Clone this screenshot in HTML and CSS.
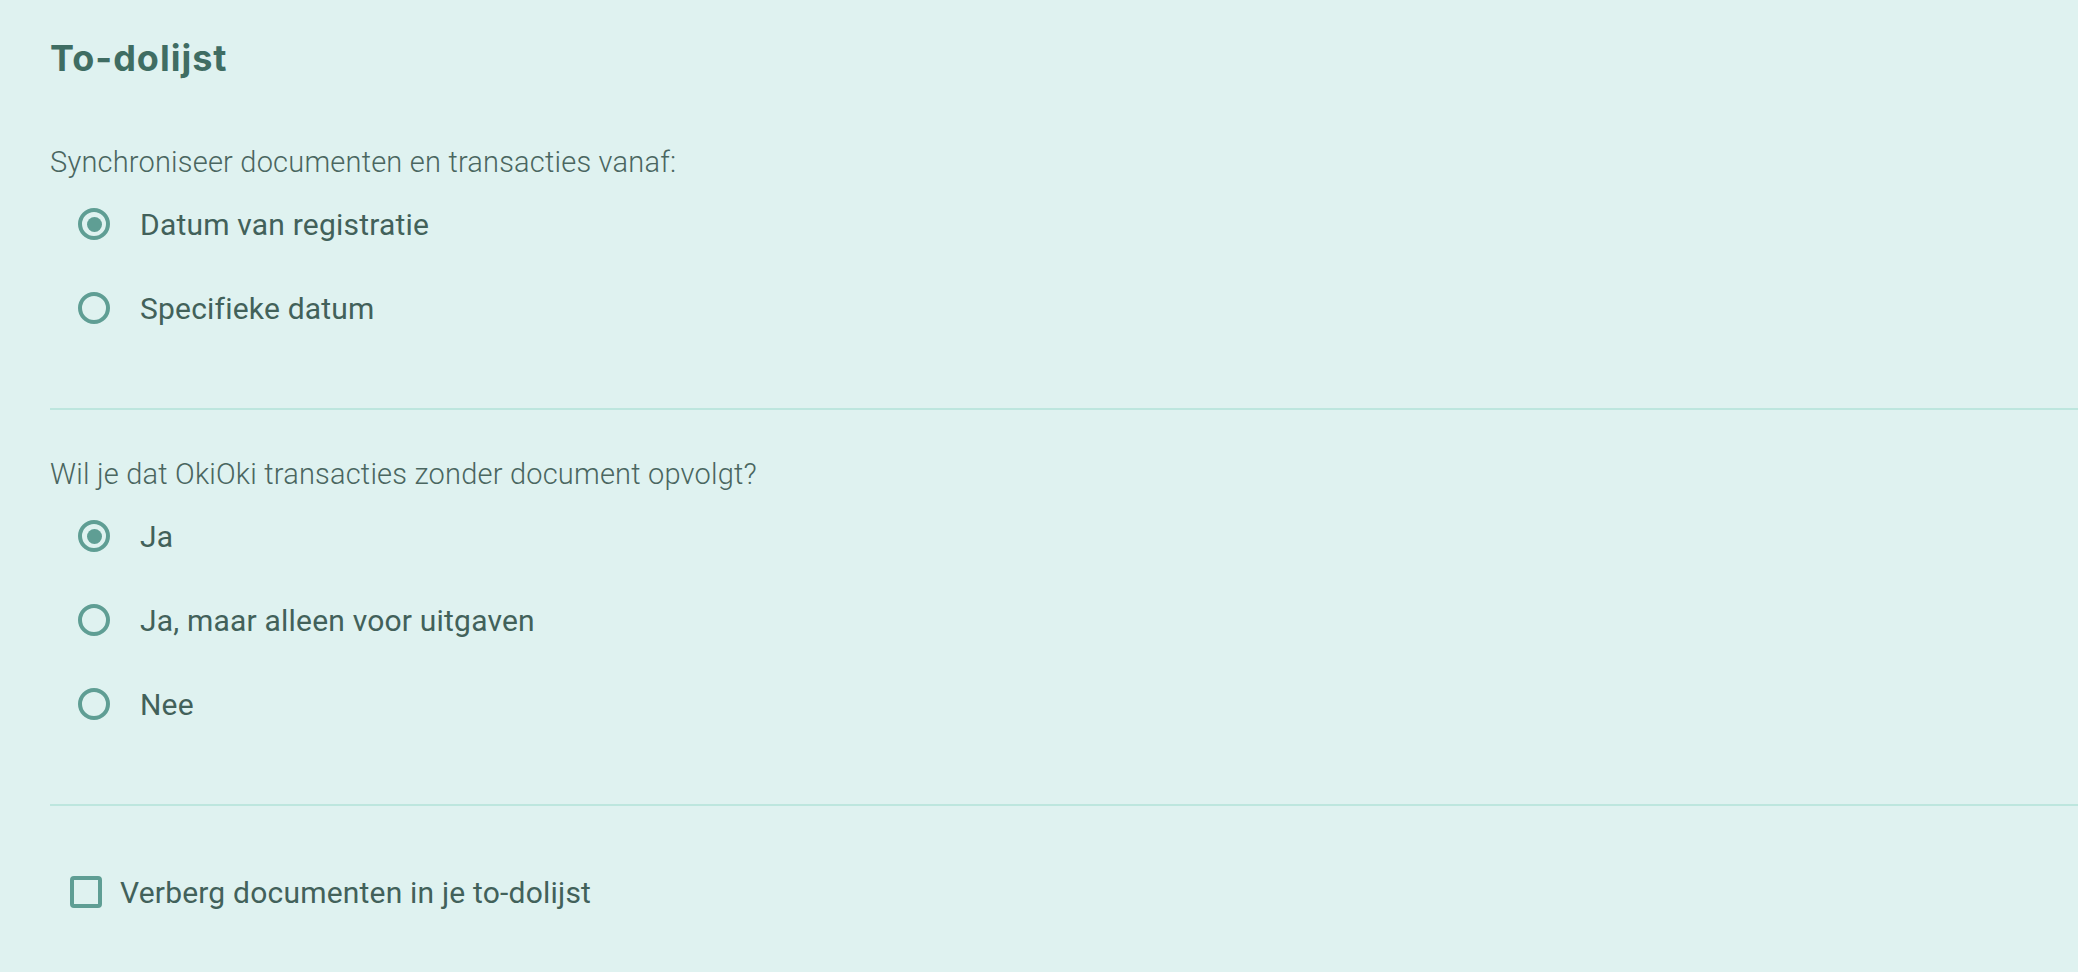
FILE: index.html
```html
<!DOCTYPE html>
<html lang="nl">
<head>
<meta charset="UTF-8">
<title>To-dolijst</title>
<link rel="stylesheet" href="styles.css">
</head>
<body>
<div class="settings">
  <h1>To-dolijst</h1>

  <section class="group first">
    <p class="question">Synchroniseer documenten en transacties vanaf:</p>
    <label class="option"><input type="radio" name="sync" checked><span>Datum van registratie</span></label>
    <label class="option"><input type="radio" name="sync"><span>Specifieke datum</span></label>
  </section>

  <section class="group">
    <p class="question">Wil je dat OkiOki transacties zonder document opvolgt?</p>
    <label class="option"><input type="radio" name="follow" checked><span>Ja</span></label>
    <label class="option"><input type="radio" name="follow"><span>Ja, maar alleen voor uitgaven</span></label>
    <label class="option"><input type="radio" name="follow"><span>Nee</span></label>
  </section>

  <section class="group last">
    <label class="check"><input type="checkbox"><span>Verberg documenten in je to-dolijst</span></label>
  </section>
</div>
</body>
</html>
```

FILE: styles.css
```css
html, body {
  margin: 0;
  background: #dff2f0;
}
body {
  font-family: Roboto, "Noto Sans", sans-serif;
  color: #42615a;
}
.settings {
  padding-left: 50px;
}
h1 {
  margin: 0;
  padding-top: 36px;
  font-family: Inter, "Noto Sans", sans-serif;
  font-weight: 700;
  font-size: 36px;
  line-height: 44px;
  letter-spacing: 1px;
  color: #3f6d63;
}
.group {
  padding: 44px 0 58px;
  border-bottom: 2px solid #bde6de;
}
.group.first {
  padding-top: 62px;
}
.group.last {
  border-bottom: none;
}
.question {
  margin: 0;
  font-weight: 300;
  font-size: 29px;
  line-height: 40px;
  letter-spacing: 0.2px;
  color: #4a6660;
}
.option, .check {
  display: flex;
  align-items: center;
  height: 84px;
  font-size: 30px;
  letter-spacing: 0.2px;
  color: #42615a;
}
.option {
  padding-left: 28px;
  gap: 30px;
}
.check {
  padding-left: 20px;
  gap: 18px;
}
.option input, .check input {
  appearance: none;
  margin: 0;
  width: 32px;
  height: 32px;
  border: 4px solid #5f9e94;
  box-sizing: border-box;
  display: grid;
  place-items: center;
}
.option input {
  border-radius: 50%;
}
.option input:checked::after {
  content: "";
  width: 15px;
  height: 15px;
  border-radius: 50%;
  background: #5f9e94;
}
.check input {
  border-radius: 4px;
}
```
